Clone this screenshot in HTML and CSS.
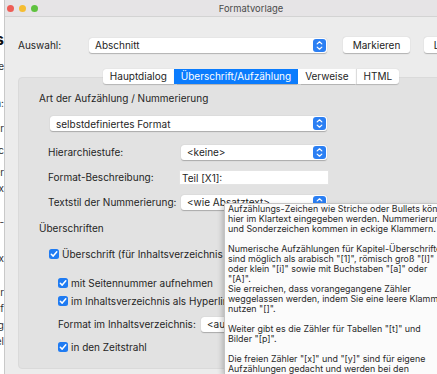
FILE: index.html
```html
<!DOCTYPE html>
<html lang="de">
<head>
  <meta charset="UTF-8">
  <meta name="viewport" content="width=device-width, initial-scale=1.0">
  <title>Formatvorlage</title>
  <link rel="stylesheet" href="styles.css">
</head>
<body>

<div class="desktop">
  <!-- window lying behind, only its right edge is visible -->
  <div class="behind">
    <div class="frag big" style="height: 30px">ls</div>
    <div class="frag" style="height: 37px">te</div>
    <div class="frag" style="height: 25px">n:</div>
    <div class="frag" style="height: 22px">ir</div>
    <div class="frag" style="height: 22px">ic</div>
    <div class="frag" style="height: 16px">er</div>
    <div class="frag" style="height: 34px">ax</div>
    <div class="frag" style="height: 36px">t-</div>
    <div class="frag" style="height: 34px">ex</div>
    <div class="frag" style="height: 16px">ar</div>
    <div class="frag" style="height: 17px">nf</div>
    <div class="frag" style="height: 16px">ng</div>
    <div class="frag" style="height: 15px">el</div>
  </div>

  <div class="window">
    <div class="titlebar">
      <div class="lights">
        <span class="light red"></span>
        <span class="light yellow"></span>
        <span class="light green"></span>
      </div>
      <div class="title">Formatvorlage</div>
    </div>

    <div class="content">
      <div class="select-row">
        <span class="label">Auswahl:</span>
        <div class="popup popup-main">
          <span>Abschnitt</span>
          <span class="stepper"><svg viewBox="0 0 13 14"><path d="M4 5.2 6.5 3 9 5.2M4 8.8 6.5 11 9 8.8"/></svg></span>
        </div>
        <button class="btn btn-mark">Markieren</button>
        <button class="btn btn-del">Löschen</button>
      </div>

      <div class="tabs">
        <span class="tab">Hauptdialog</span>
        <span class="tab active">Überschrift/Aufzählung</span>
        <span class="tab">Verweise</span>
        <span class="tab">HTML</span>
      </div>

      <div class="panel">
        <div class="heading">Art der Aufzählung / Nummerierung</div>
        <div class="popup popup-type">
          <span>selbstdefiniertes Format</span>
          <span class="stepper"><svg viewBox="0 0 13 14"><path d="M4 5.2 6.5 3 9 5.2M4 8.8 6.5 11 9 8.8"/></svg></span>
        </div>

        <div class="form-grid">
          <span class="label">Hierarchiestufe:</span>
          <div class="popup">
            <span>&lt;keine&gt;</span>
            <span class="stepper"><svg viewBox="0 0 13 14"><path d="M4 5.2 6.5 3 9 5.2M4 8.8 6.5 11 9 8.8"/></svg></span>
          </div>
          <span class="label">Format-Beschreibung:</span>
          <div class="textfield">Teil [X1]:</div>
          <span class="label">Textstil der Nummerierung:</span>
          <div class="popup">
            <span>&lt;wie Absatztext&gt;</span>
            <span class="stepper"><svg viewBox="0 0 13 14"><path d="M4 5.2 6.5 3 9 5.2M4 8.8 6.5 11 9 8.8"/></svg></span>
          </div>
        </div>

        <div class="heading heading-2">Überschriften</div>

        <label class="check check-1"><span class="box"><svg viewBox="0 0 10 10"><path d="M2.3 5.2 4.2 7.1 7.8 2.8"/></svg></span>Überschrift (für Inhaltsverzeichnis / Navigation)</label>
        <div class="sub">
          <label class="check check-2"><span class="box"><svg viewBox="0 0 10 10"><path d="M2.3 5.2 4.2 7.1 7.8 2.8"/></svg></span>mit Seitennummer aufnehmen</label>
          <label class="check check-3"><span class="box"><svg viewBox="0 0 10 10"><path d="M2.3 5.2 4.2 7.1 7.8 2.8"/></svg></span>im Inhaltsverzeichnis als Hyperlink</label>
          <div class="format-row">
            <span class="label">Format im Inhaltsverzeichnis:</span>
            <div class="popup popup-toc">
              <span>&lt;automatisch&gt;</span>
              <span class="stepper"><svg viewBox="0 0 13 14"><path d="M4 5.2 6.5 3 9 5.2M4 8.8 6.5 11 9 8.8"/></svg></span>
            </div>
          </div>
          <label class="check check-4"><span class="box"><svg viewBox="0 0 10 10"><path d="M2.3 5.2 4.2 7.1 7.8 2.8"/></svg></span>in den Zeitstrahl</label>
        </div>
      </div>
    </div>
  </div>

  <!-- help tooltip over the dialog -->
  <div class="tooltip">
    <p>Aufzählungs-Zeichen wie Striche oder Bullets können<br>
    hier im Klartext eingegeben werden. Nummerierungen<br>
    und Sonderzeichen kommen in eckige Klammern.</p>
    <p>Numerische Aufzählungen für Kapitel-Überschriften<br>
    sind möglich als arabisch "[1]", römisch groß "[I]"<br>
    oder klein "[i]" sowie mit Buchstaben "[a]" oder<br>
    "[A]".<br>
    Sie erreichen, dass vorangegangene Zähler<br>
    weggelassen werden, indem Sie eine leere Klammern<br>
    nutzen "[]".</p>
    <p>Weiter gibt es die Zähler für Tabellen "[t]" und<br>
    Bilder "[p]".</p>
    <p>Die freien Zähler "[x]" und "[y]" sind für eigene<br>
    Aufzählungen gedacht und werden bei den</p>
  </div>
</div>

</body>
</html>
```

FILE: styles.css
```css
body {
  margin: 0;
  padding: 0;
  width: 437px;
  height: 374px;
  overflow: hidden;
  background-color: #ffffff;
  font-family: Inter, "Liberation Sans", Arial, sans-serif;
  font-size: 10px;
  color: #252525;
}

.desktop {
  position: relative;
  display: flex;
  width: 437px;
  height: 374px;
  overflow: hidden;
}

/* window behind */
.behind {
  width: 4px;
  flex-shrink: 0;
  padding-top: 30px;
  overflow: hidden;
  background-color: #ffffff;
  display: flex;
  flex-direction: column;
  align-items: flex-end;
  font-size: 10px;
  line-height: 12px;
  color: #333333;
}

.behind .frag {
  white-space: nowrap;
}

.behind .big {
  font-size: 16px;
  font-weight: bold;
  line-height: 18px;
  color: #111111;
}

/* dialog window */
.window {
  width: 492px;
  flex-shrink: 0;
  background-color: #ececec;
  border-left: 1px solid #c9c9c9;
}

.titlebar {
  position: relative;
  height: 16px;
  display: flex;
  align-items: center;
  justify-content: center;
  background-color: #e6e4e6;
  border-bottom: 1px solid #d3d3d3;
}

.lights {
  position: absolute;
  left: 2px;
  top: 5px;
  display: flex;
  gap: 5px;
}

.light {
  width: 7px;
  height: 7px;
  border-radius: 50%;
}

.light.red { background-color: #ee5d56; }
.light.yellow { background-color: #f5bd32; }
.light.green { background-color: #5fc23f; }

.title {
  font-size: 9.4px;
  color: #4b4b4b;
}

.content {
  padding: 20px 13px 0 13px;
}

.label {
  white-space: nowrap;
}

.select-row {
  display: flex;
  align-items: center;
  height: 16px;
}

.select-row .label {
  width: 71px;
}

/* popup buttons */
.popup {
  display: flex;
  align-items: center;
  justify-content: space-between;
  height: 15px;
  padding-left: 6px;
  padding-right: 1px;
  background-color: #ffffff;
  border-radius: 3px;
  box-shadow: 0 0.5px 1px rgba(0, 0, 0, 0.25);
  box-sizing: border-box;
  white-space: nowrap;
}

.popup-main {
  width: 238px;
}

.stepper {
  width: 13px;
  height: 13px;
  border-radius: 3px;
  background-color: #2b7ff3;
  display: flex;
}

.stepper svg {
  width: 13px;
  height: 13px;
  fill: none;
  stroke: #ffffff;
  stroke-width: 1.3;
  stroke-linecap: round;
  stroke-linejoin: round;
}

.btn {
  height: 16px;
  padding: 0;
  border: none;
  border-radius: 3px;
  background-color: #ffffff;
  box-shadow: 0 0.5px 1px rgba(0, 0, 0, 0.25);
  font-family: inherit;
  font-size: 10px;
  color: #222222;
}

.btn-mark {
  width: 67px;
  margin-left: 16px;
  margin-right: 14px;
}

.btn-del {
  width: 60px;
}

/* tab bar */
.tabs {
  position: relative;
  z-index: 1;
  display: flex;
  justify-content: center;
  margin-top: 16px;
  margin-bottom: -7px;
}

.tab {
  height: 15px;
  line-height: 15px;
  padding: 0 7px;
  background-color: #ffffff;
  border-left: 1px solid #dcdcdc;
  box-shadow: 0 0.5px 1px rgba(0, 0, 0, 0.2);
}

.tab:first-child {
  border-left: none;
  border-radius: 3px 0 0 3px;
}

.tab:last-child {
  border-radius: 0 3px 3px 0;
}

.tab.active {
  background-color: #0b7cfd;
  color: #ffffff;
  border-left: none;
}

.tab.active + .tab {
  border-left: none;
}

/* tab panel */
.panel {
  height: 292px;
  padding: 14px 0 0 20px;
  background-color: #e2e2e2;
  border: 1px solid #dadada;
  border-radius: 4px;
  box-sizing: border-box;
}

.heading {
  height: 12px;
  line-height: 12px;
}

.popup-type {
  width: 277px;
  margin-top: 12px;
  margin-left: 11px;
}

.form-grid {
  display: grid;
  grid-template-columns: 132px 148px;
  grid-auto-rows: 16px;
  row-gap: 9px;
  align-items: center;
  margin-top: 13px;
  margin-left: 9px;
}

.form-grid .popup {
  width: 146px;
  margin-left: 1px;
}

.textfield {
  height: 15px;
  width: 150px;
  margin-left: -1px;
  padding-left: 2px;
  line-height: 15px;
  background-color: #ffffff;
  border: 1px solid #e4e4e4;
  box-sizing: border-box;
}

.heading-2 {
  margin-top: 12px;
}

/* checkboxes */
.check {
  display: flex;
  align-items: center;
  height: 12px;
  white-space: nowrap;
}

.box {
  width: 10px;
  height: 10px;
  margin-right: 3px;
  border-radius: 2.5px;
  background-color: #1f7bf2;
  display: flex;
}

.box svg {
  width: 10px;
  height: 10px;
  fill: none;
  stroke: #ffffff;
  stroke-width: 1.5;
  stroke-linecap: round;
  stroke-linejoin: round;
}

.check-1 {
  margin-top: 14px;
  margin-left: 10px;
}

.sub {
  margin-left: 19px;
}

.check-2 {
  margin-top: 17px;
}

.check-3 {
  margin-top: 6px;
}

.format-row {
  display: flex;
  align-items: center;
  height: 16px;
  margin-top: 9px;
}

.format-row .label {
  width: 143px;
}

.popup-toc {
  width: 130px;
}

.check-4 {
  margin-top: 9px;
}

/* tooltip */
.tooltip {
  position: absolute;
  left: 224px;
  top: 203px;
  width: 213px;
  height: 171px;
  padding: 0 0 0 3px;
  box-sizing: border-box;
  overflow: hidden;
  background-color: #fbfbfb;
  border-top: 1px solid #c4c4c4;
  border-left: 1px solid #c4c4c4;
  box-shadow: -2px 2px 5px rgba(0, 0, 0, 0.2);
  font-size: 8.9px;
  line-height: 10px;
  color: #2a2a2a;
  white-space: nowrap;
}

.tooltip p {
  margin: 0 0 10px 0;
}
```
